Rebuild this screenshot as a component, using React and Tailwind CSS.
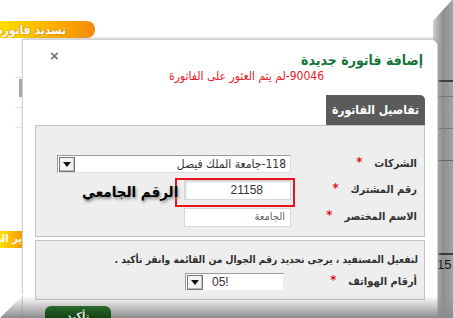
import React from 'react';

const ar = { fontFamily: 'Tahoma, "DejaVu Sans", sans-serif' };
const latin = { fontFamily: 'Arial, "Liberation Sans", sans-serif' };

const Star = () => <span className="text-[#e3101a] text-[13px] leading-none mt-[-6px]">*</span>;

const DropBtn = () => (
  <span className="flex items-center justify-center w-[16px] h-[15px] border border-[#777] bg-[#f4f4f4] shadow-[inset_-1px_-1px_0_#bbb]">
    <svg width="8" height="5" viewBox="0 0 8 5"><path d="M0 0h8L4 5z" fill="#111" /></svg>
  </span>
);

const Row = ({ label, children, h = 'h-[28px]' }) => (
  <div className={`flex items-center ${h}`}>
    <div className="w-[133px] shrink-0 flex items-center gap-[12px] pr-[7px] text-[11px] font-bold text-[#333]">
      <span>{label}</span>
      <Star />
    </div>
    {children}
  </div>
);

export default function App() {
  return (
    <div className="relative w-[453px] h-[318px] overflow-hidden bg-white font-stretch-condensed" style={ar}>
      {/* page behind the dialog */}
      <div className="absolute left-0 top-[21px] w-[95px] h-[17px] rounded-r-[8px] bg-linear-to-r from-[#ffe000] via-[#fbb400] to-[#f58b0a] flex items-center justify-end pr-[29px] overflow-hidden">
        <span dir="rtl" className="text-white text-[12px] font-bold whitespace-nowrap [text-shadow:0_0_2px_#c06000]">تسديد فاتورة</span>
      </div>
      <div className="absolute left-[19px] top-[79px] w-[4px] h-[18px] bg-[#a8a8a8]" />
      <div className="absolute left-[33px] top-[79px] w-[12px] h-[18px] border-l border-t border-[#888] bg-white">
        <div className="ml-[3px] mt-[2px] w-[1px] h-[13px] bg-[#555]" />
      </div>
      <div className="absolute left-[15px] top-[77px] w-[30px] h-px bg-[#e4e4e4]" />
      <div className="absolute left-[15px] top-[107px] w-[30px] h-px bg-[#e0e0e0]" />
      <div className="absolute left-[15px] top-[127px] w-[30px] h-px bg-[#e6e6e6]" />
      <div className="absolute left-0 top-[231px] w-[22px] h-[17px] bg-linear-to-r from-[#ffe000] to-[#f59a00] flex items-center justify-end overflow-hidden">
        <span dir="rtl" className="text-white text-[11px] font-bold whitespace-nowrap">ير الق</span>
      </div>
      <div className="absolute left-[33px] top-[231px] w-[12px] h-[17px] bg-[#f59a00] flex items-center justify-end overflow-hidden">
        <span dir="rtl" className="text-white text-[11px] font-bold whitespace-nowrap">ير</span>
      </div>

      {/* right shadow band */}
      <div className="absolute right-0 top-0 w-[20px] h-full bg-linear-to-r from-[#d0d0d0] via-[#8e8e8e] to-[#a4a4a4]">
        <div className="absolute left-0 top-[80px] w-full h-[2px] bg-[#3f3f3f]" />
        <div className="absolute left-0 top-[96px] w-full h-px bg-[#777]" />
        <div className="absolute left-0 top-[107px] w-full h-px bg-[#999]" />
        <div className="absolute left-0 top-[128px] w-full h-px bg-[#777]" />
        <div className="absolute left-0 top-[135px] w-full h-px bg-[#999]" />
        <div className="absolute left-0 top-[160px] w-full h-px bg-[#666]" />
        <div className="absolute left-0 top-[253px] w-full h-[2px] bg-[#3a3a3a]" />
        <span className="absolute left-[4px] top-[255px] text-[13px] text-[#111]" style={latin}>15</span>
      </div>
      <svg className="absolute right-0 top-0" width="20" height="22" viewBox="0 0 20 22">
        <path d="M0 0H19L0 21z" fill="#fff" />
      </svg>

      {/* dialog */}
      <div dir="rtl" className="absolute left-[22px] top-[39px] w-[416px] h-[300px] bg-white border border-[#d4d4d4] rounded-tr-[7px] shadow-[1px_0_3px_#999]">
        <span className="absolute left-[27px] top-[8px] text-[#777] text-[15px] font-bold leading-none" style={latin}>×</span>
        <div className="pr-[14px] pt-[11px]">
          <div className="text-[14px] font-semibold text-[#15743a] leading-[18px]">إضافة فاتورة جديدة</div>
          <div className="pr-[99px] text-[12px] text-[#e8202a] leading-[15px]">90046-لم يتم العثور على الفاتورة</div>
        </div>
        <div className="mr-[12px] ml-[12px] mt-[11px]">
          <div className="w-[99px] h-[30px] bg-[#5b5b5b] rounded-tr-[5px] flex items-center justify-center text-white text-[12px] font-bold whitespace-nowrap">تفاصيل الفاتورة</div>
          <div className="border border-[#c4c4c4] bg-[#eeeeee] pt-[25px] pb-[5px]">
            <Row label="الشركات" h="h-[26px]">
              <div className="w-[234px] h-[18px] bg-white border border-[#9a9a9a] border-r-[#ddd] border-b-[#ddd] flex items-center justify-between pr-[4px] pl-[1px]">
                <span className="text-[12px] text-[#333]">118-جامعة الملك فيصل</span>
                <DropBtn />
              </div>
            </Row>
            <Row label="رقم المشترك" h="h-[26px]">
              <div className="w-[107px] h-[20px] bg-white border border-[#d8d8d8] shadow-[inset_1px_1px_2px_#ccc] flex items-center pr-[27px] text-[12px] text-[#333]" style={latin}>21158</div>
            </Row>
            <Row label="الاسم المختصر" h="h-[28px]">
              <div className="w-[107px] h-[19px] bg-white border border-[#d8d8d8] flex items-center pr-[5px] text-[11px] text-[#666]">الجامعة</div>
            </Row>
          </div>
          <div className="mt-[3px] border border-[#c4c4c4] bg-[#eeeeee] h-[60px] pt-[12px]">
            <div className="pr-[6px] text-[10.2px] font-bold text-[#2f2f2f] leading-[14px] whitespace-nowrap">لتفعيل المستفيد ، يرجى تحديد رقم الجوال من القائمة وانقر تأكيد .</div>
            <Row label="أرقام الهواتف" h="h-[30px]">
              <div className="mr-[7px] w-[99px] h-[18px] bg-white border border-[#9a9a9a] border-r-[#eee] border-b-[#eee] flex items-center justify-between pl-[1px]">
                <span />
                <div className="flex items-center gap-[9px]" dir="ltr">
                  <DropBtn />
                  <span className="text-[12px] text-[#333]" style={latin}>05!</span>
                </div>
              </div>
            </Row>
          </div>
        </div>
      </div>

      {/* annotations */}
      <div className="absolute left-[175px] top-[178px] w-[120px] h-[29px] border-2 border-[#e8141c]" />
      <span dir="rtl" className="absolute left-[82px] top-[181px] text-[15px] font-bold text-black whitespace-nowrap [text-shadow:1px_2px_3px_#888]">الرقم الجامعي</span>

      {/* bottom shadow */}
      <div className="absolute left-0 bottom-0 w-full h-[22px] bg-linear-to-b from-[#ffffff00] to-[#8c8c8c]" />
      <svg className="absolute left-0 bottom-0" width="24" height="24" viewBox="0 0 24 24">
        <path d="M0 0V24H0L23 1V0z" fill="#fff" />
      </svg>
      <div className="absolute left-[45px] top-[306px] w-[66px] h-[14px] rounded-t-[6px] bg-linear-to-b from-[#2c6a2c] to-[#0e3b10] flex justify-center pt-[3px]">
        <span className="text-[#ddd] text-[11px] font-bold">تأكيد</span>
      </div>
    </div>
  );
}
